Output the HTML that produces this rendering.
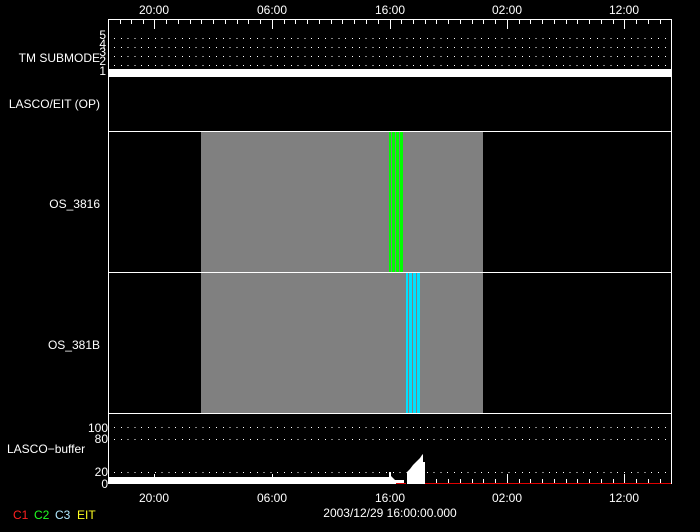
<!DOCTYPE html>
<html><head><meta charset="utf-8"><style>
html,body{margin:0;padding:0;background:#000;width:700px;height:532px;overflow:hidden}
svg text{font-family:"Liberation Sans",sans-serif;fill:#fff;font-size:12px}
</style></head><body>
<svg width="700" height="532" viewBox="0 0 700 532" xmlns="http://www.w3.org/2000/svg">
<rect width="700" height="532" fill="#000"/>
<rect x="201" y="132" width="282" height="281" fill="#808080"/>
<g fill="#00ff00">
<rect x="389" y="132" width="2" height="140"/><rect x="392" y="132" width="3" height="140"/><rect x="396" y="132" width="3" height="140"/><rect x="400" y="132" width="3" height="140"/>
</g>
<g fill="#00e0ff">
<rect x="406" y="273" width="2" height="140"/><rect x="409" y="273" width="3" height="140"/><rect x="413" y="273" width="3" height="140"/><rect x="417" y="273" width="3" height="140"/>
</g>
<g stroke="#fff" stroke-width="1" fill="none" shape-rendering="crispEdges">
<line x1="108.5" y1="19" x2="108.5" y2="484"/>
<line x1="671.5" y1="19" x2="671.5" y2="484"/>
<line x1="108" y1="19.5" x2="672" y2="19.5"/>
<line x1="108" y1="131.5" x2="672" y2="131.5"/>
<line x1="108" y1="272.5" x2="672" y2="272.5"/>
<line x1="108" y1="413.5" x2="672" y2="413.5"/>
</g>
<g stroke="#fff" shape-rendering="crispEdges">
<path d="M120.5 20v4M131.5 20v4M143.5 20v4M154.5 20v9M166.5 20v4M178.5 20v4M190.5 20v4M201.5 20v4M213.5 20v4M225.5 20v4M237.5 20v4M248.5 20v4M260.5 20v4M272.5 20v9M284.5 20v4M295.5 20v4M307.5 20v4M319.5 20v4M331.5 20v4M342.5 20v4M354.5 20v4M366.5 20v4M378.5 20v4M390.5 20v9M401.5 20v4M413.5 20v4M425.5 20v4M436.5 20v4M448.5 20v4M460.5 20v4M472.5 20v4M483.5 20v4M495.5 20v4M507.5 20v9M519.5 20v4M530.5 20v4M542.5 20v4M554.5 20v4M566.5 20v4M577.5 20v4M589.5 20v4M601.5 20v4M613.5 20v4M624.5 20v9M636.5 20v4M648.5 20v4M660.5 20v4"/>
</g>
<g stroke="#fff" stroke-dasharray="1 5.8" shape-rendering="crispEdges">
<line x1="114" y1="38.5" x2="670" y2="38.5"/>
<line x1="114" y1="47.5" x2="670" y2="47.5"/>
<line x1="114" y1="56.5" x2="670" y2="56.5"/>
<line x1="114" y1="65.5" x2="670" y2="65.5"/>
<line x1="114" y1="427.5" x2="670" y2="427.5"/>
<line x1="114" y1="439.5" x2="670" y2="439.5"/>
<line x1="114" y1="472.5" x2="670" y2="472.5"/>
</g>
<rect x="109" y="69" width="562" height="8" fill="#fff"/>
<rect x="109" y="477" width="282" height="7" fill="#fff"/>
<rect x="389" y="472" width="2" height="12" fill="#fff"/>
<polygon points="391,476 393,478 395,480 404,480 404,484 391,484" fill="#fff"/>
<polygon points="407,484 407,472 410,469 413,465 417,461 420,458 422,455 423,454 423,462 425,462 425,484" fill="#fff"/>
<rect x="425" y="483" width="246" height="1" fill="#e00000"/>
<rect x="396" y="483" width="10" height="1" fill="#e00000"/>
<g stroke="#fff" shape-rendering="crispEdges">
<path d="M154.5 474v4M272.5 474v4M436.5 479v4M448.5 479v4M460.5 479v4M472.5 479v4M483.5 479v4M495.5 479v4M507.5 474v9M519.5 479v4M530.5 479v4M542.5 479v4M554.5 479v4M566.5 479v4M577.5 479v4M589.5 479v4M601.5 479v4M613.5 479v4M624.5 474v9M636.5 479v4M648.5 479v4M660.5 479v4"/>
</g>
<g text-anchor="middle">
<text x="154" y="14">20:00</text><text x="272" y="14">06:00</text><text x="390" y="14">16:00</text><text x="507" y="14">02:00</text><text x="624" y="14">12:00</text>
<text x="154" y="502">20:00</text><text x="272" y="502">06:00</text><text x="390" y="502">16:00</text><text x="507" y="502">02:00</text><text x="624" y="502">12:00</text>
<text x="390" y="517">2003/12/29 16:00:00.000</text>
</g>
<g text-anchor="end">
<text x="100" y="62">TM SUBMODE</text>
<text x="100" y="108">LASCO/EIT (OP)</text>
<text x="100" y="208">OS_3816</text>
<text x="100" y="349">OS_381B</text>
<text x="106" y="39" font-size="10">5</text>
<text x="106" y="48" font-size="10">4</text>
<text x="106" y="56" font-size="10">3</text>
<text x="106" y="65" font-size="10">2</text>
<text x="106" y="75" font-size="10">1</text>
<text x="108" y="432">100</text>
<text x="108" y="443">80</text>
<text x="108" y="476">20</text>
<text x="108" y="488">0</text>
</g>
<text x="7" y="453">LASCO−buffer</text>
<text x="13" y="519" font-size="9" style="fill:#ff2020">C1</text>
<text x="34" y="519" font-size="9" style="fill:#20ff20">C2</text>
<text x="55" y="519" font-size="9" style="fill:#b0e8ff">C3</text>
<text x="77" y="519" font-size="9" style="fill:#ffff20">EIT</text>
</svg>
</body></html>
